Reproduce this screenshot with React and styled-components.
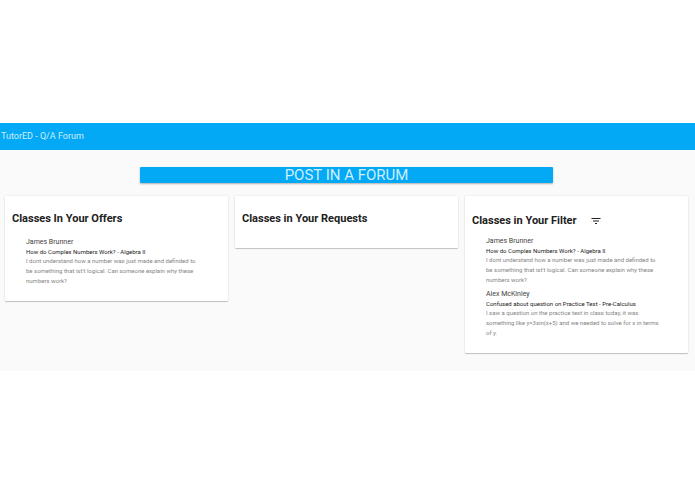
import styled, { createGlobalStyle } from 'styled-components';

const GlobalStyle = createGlobalStyle`
  body {
    margin: 0;
    background: #fff;
    color: #212121;
    font-family: Roboto, 'Liberation Sans', sans-serif;
  }
`;

const Page = styled.div`
  margin-top: 123px;
  background: #fafafa;
`;

const Header = styled.header`
  display: flex;
  align-items: center;
  height: 27px;
  padding: 0 1px 2px;
  box-sizing: border-box;
  background: #03a9f4;
`;

const SiteTitle = styled.h1`
  margin: 0;
  color: #cdeefd;
  font-size: 9px;
  font-weight: 400;
  line-height: 12px;
`;

const Main = styled.main`
  display: flex;
  flex-direction: column;
  align-items: center;
  gap: 13px;
  padding: 17px 7px 18px 5px;
`;

const PostButton = styled.button`
  width: 60.4%;
  height: 16px;
  padding: 0;
  border: 0;
  border-radius: 1px;
  background: #03a9f4;
  box-shadow: 0 1px 2px rgba(0, 0, 0, 0.3);
  color: #cdeefd;
  font-family: inherit;
  font-size: 15px;
  line-height: 16px;
  text-transform: uppercase;
  cursor: pointer;
`;

const Columns = styled.div`
  display: grid;
  grid-template-columns: repeat(3, 1fr);
  align-items: start;
  gap: 7px;
  width: 100%;
`;

const Card = styled.section`
  padding: 15px 7px;
  border-radius: 1px;
  background: #fff;
  box-shadow: 0 1px 1px rgba(0, 0, 0, 0.2), 0 0 2px rgba(0, 0, 0, 0.12);
`;

const CardHeader = styled.div`
  display: flex;
  align-items: center;
  gap: 12px;
  height: ${(props) => (props.$tall ? '19px' : '16px')};
  margin-bottom: 6px;
`;

const CardTitle = styled.h2`
  margin: 0;
  font-size: 11px;
  font-weight: 700;
  line-height: 16px;
`;

const FilterButton = styled.button`
  display: flex;
  padding: 1px;
  border: 0;
  background: none;
  color: #212121;
  cursor: pointer;
`;

const Posts = styled.ul`
  display: grid;
  gap: 4px;
  margin: 0;
  padding: ${(props) => (props.$spaced ? '4px' : '0')} 22px 0 14px;
  list-style: none;
`;

const Author = styled.h3`
  margin: 0;
  color: #424242;
  font-size: 7px;
  font-weight: 400;
  line-height: 10px;
`;

const Subject = styled.h4`
  margin: 0;
  font-size: 6px;
  font-weight: 400;
  line-height: 9px;
`;

const Message = styled.p`
  margin: 0;
  color: #858585;
  font-size: 6px;
  line-height: 10px;
`;

const complexNumbers = {
  author: 'James Brunner',
  subject: 'How do Complex Numbers Work? - Algebra II',
  message:
    "I dont understand how a number was just made and definded to be something that ist't logical. Can someone explain why these numbers work?",
};

const practiceTest = {
  author: 'Alex McKinley',
  subject: 'Confused about question on Practice Test - Pre-Calculus',
  message:
    'I saw a question on the practice test in class today, it was something like y=3sin(x+5) and we needed to solve for x in terms of y.',
};

const columns = [
  { title: 'Classes In Your Offers', posts: [complexNumbers] },
  { title: 'Classes in Your Requests', posts: [] },
  {
    title: 'Classes in Your Filter',
    posts: [complexNumbers, practiceTest],
    filter: true,
  },
];

const FilterIcon = () => (
  <svg width="12" height="12" viewBox="0 0 24 24" fill="currentColor" aria-hidden="true">
    <path d="M10 18h4v-2h-4v2zM3 6v2h18V6H3zm3 7h12v-2H6v2z" />
  </svg>
);

const ForumCard = ({ title, posts, filter }) => (
  <Card>
    <CardHeader $tall={filter}>
      <CardTitle>{title}</CardTitle>
      {filter ? (
        <FilterButton type="button" aria-label="Filter classes">
          <FilterIcon />
        </FilterButton>
      ) : null}
    </CardHeader>
    {posts.length > 0 ? (
      <Posts $spaced={!filter}>
        {posts.map((post) => (
          <li key={post.author}>
            <Author>{post.author}</Author>
            <Subject>{post.subject}</Subject>
            <Message>{post.message}</Message>
          </li>
        ))}
      </Posts>
    ) : null}
  </Card>
);

const App = () => {
  return (
    <>
      <GlobalStyle />
      <Page>
        <Header>
          <SiteTitle>TutorED - Q/A Forum</SiteTitle>
        </Header>
        <Main>
          <PostButton type="button">Post in a Forum</PostButton>
          <Columns>
            {columns.map((column) => (
              <ForumCard key={column.title} {...column} />
            ))}
          </Columns>
        </Main>
      </Page>
    </>
  );
};

export default App;
